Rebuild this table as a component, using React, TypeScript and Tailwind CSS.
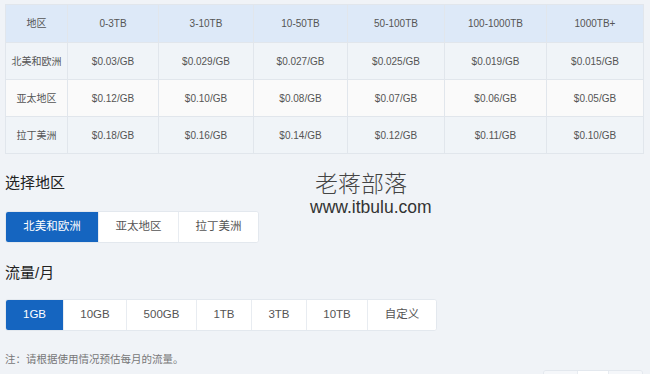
import { useState } from "react";

const tiers = ["0-3TB", "3-10TB", "10-50TB", "50-100TB", "100-1000TB", "1000TB+"];
const colWidths = ["w-[62px]", "w-[91px]", "w-[95px]", "w-[94px]", "w-[97px]", "w-[102px]", "w-[97px]"];

const prices = [
  { region: "北美和欧洲", values: ["$0.03/GB", "$0.029/GB", "$0.027/GB", "$0.025/GB", "$0.019/GB", "$0.015/GB"] },
  { region: "亚太地区", values: ["$0.12/GB", "$0.10/GB", "$0.08/GB", "$0.07/GB", "$0.06/GB", "$0.05/GB"] },
  { region: "拉丁美洲", values: ["$0.18/GB", "$0.16/GB", "$0.14/GB", "$0.12/GB", "$0.11/GB", "$0.10/GB"] },
];

const regions = [
  { label: "北美和欧洲", w: "w-[92px]" },
  { label: "亚太地区", w: "w-[80px]" },
  { label: "拉丁美洲", w: "w-[80px]" },
];

const traffic = [
  { label: "1GB", w: "w-[57px]" },
  { label: "10GB", w: "w-[63px]" },
  { label: "500GB", w: "w-[70px]" },
  { label: "1TB", w: "w-[55px]" },
  { label: "3TB", w: "w-[55px]" },
  { label: "10TB", w: "w-[61px]" },
  { label: "自定义", w: "w-[69px]" },
];

function Segmented({
  items,
  active,
  onPick,
}: {
  items: { label: string; w: string }[];
  active: number;
  onPick: (i: number) => void;
}) {
  return (
    <div className="flex h-[32px] w-fit overflow-hidden rounded-[3px] border border-[#e3e8ee] bg-white">
      {items.map((it, i) => (
        <button
          key={it.label}
          onClick={() => onPick(i)}
          className={`${it.w} flex h-full items-center justify-center text-[11.5px] ${
            i > 0 ? "border-l border-[#e8ecf1]" : ""
          } ${i === active ? "bg-[#1565c0] text-white" : "bg-white text-[#555]"}`}
        >
          {it.label}
        </button>
      ))}
    </div>
  );
}

export default function App() {
  const [region, setRegion] = useState(0);
  const [amount, setAmount] = useState(0);

  return (
    <div
      className="relative h-[374px] w-[650px] overflow-hidden bg-[#f0f3f7] pl-[5px] pt-[4px]"
      style={{ fontFamily: '"Liberation Sans", Arial, "Noto Sans CJK SC", sans-serif' }}
    >
      <table className="w-[638px] table-fixed border-collapse text-center text-[10px] text-[#555]">
        <thead>
          <tr className="h-[38px] bg-[#dde9f8]">
            <th className={`${colWidths[0]} border border-[#e1e6ec] font-normal`}>地区</th>
            {tiers.map((t, i) => (
              <th key={t} className={`${colWidths[i + 1]} border border-[#e1e6ec] font-normal`}>
                {t}
              </th>
            ))}
          </tr>
        </thead>
        <tbody>
          {prices.map((row, r) => (
            <tr key={row.region} className={`h-[37px] ${r === 1 ? "bg-[#fafafa]" : "bg-[#f0f4f8]"}`}>
              <td className="border border-[#e1e6ec]">{row.region}</td>
              {row.values.map((v, i) => (
                <td key={i} className="border border-[#e1e6ec]">
                  {v}
                </td>
              ))}
            </tr>
          ))}
        </tbody>
      </table>

      <h2 className="mt-[18px] text-[15px] leading-[22px] text-[#222]">选择地区</h2>
      <div className="mt-[17px]">
        <Segmented items={regions} active={region} onPick={setRegion} />
      </div>

      <h2 className="mt-[19px] text-[15px] leading-[22px] text-[#222]">流量/月</h2>
      <div className="mt-[15px]">
        <Segmented items={traffic} active={amount} onPick={setAmount} />
      </div>

      <p className="mt-[20px] text-[10.5px] leading-[16px] text-[#777]">注：请根据使用情况预估每月的流量。</p>

      <div className="mt-[3px] flex justify-end pr-[7px]">
        <div className="flex h-[30px] overflow-hidden rounded-[3px] border border-[#e3e8ee]">
          <span className="w-[33px] bg-[#f5f7fa]" />
          <span className="w-[31px] border-l border-[#e8ecf1] bg-white" />
          <span className="w-[34px] border-l border-[#e8ecf1] bg-[#f5f7fa]" />
        </div>
      </div>

      <div className="pointer-events-none absolute left-[310px] top-[168px] flex flex-col text-[#333]">
        <span
          className="pl-[5px] text-[23px] leading-[28px] text-[#444]"
          style={{ fontFamily: '"Noto Sans CJK SC", sans-serif', fontWeight: 300 }}
        >
          老蒋部落
        </span>
        <span className="mt-[2px] text-[17.5px] leading-[18px]">www.itbulu.com</span>
      </div>
    </div>
  );
}
